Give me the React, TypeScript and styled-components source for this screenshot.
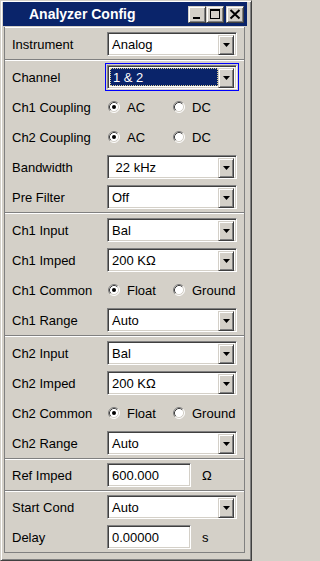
import React from 'react';
import styled, { createGlobalStyle } from 'styled-components';

const Global = createGlobalStyle`
  html, body { margin: 0; padding: 0; background: #d4d0c8; }
  body { font-family: "Liberation Sans", Arial, sans-serif; font-size: 13px; color: #000; }
  * { box-sizing: border-box; }
`;

const Window = styled.div`
  width: 252px;
  height: 561px;
  background: #d4d0c8;
  border: 1px solid;
  border-color: #d4d0c8 #404040 #404040 #d4d0c8;
  box-shadow: inset 1px 1px #ffffff, inset -1px -1px #808080;
  padding: 1px 4px 3px 2px;
  display: flex;
  flex-direction: column;
`;

const TitleBar = styled.div`
  height: 24px;
  flex: none;
  background: #0a246a;
  display: flex;
  align-items: center;
  padding: 0 3px 0 26px;
`;

const Title = styled.div`
  color: #fff;
  font-weight: bold;
  font-size: 14px;
  white-space: nowrap;
`;

const TitleButtons = styled.div`
  margin-left: auto;
  display: flex;
  align-items: center;
`;

const RaisedButton = styled.div<{ $w: number; $h: number; $gap?: number }>`
  width: ${(p) => p.$w}px;
  height: ${(p) => p.$h}px;
  margin-left: ${(p) => p.$gap ?? 0}px;
  flex: none;
  background: #d4d0c8;
  border: 1px solid;
  border-color: #d4d0c8 #404040 #404040 #d4d0c8;
  box-shadow: inset 1px 1px #ffffff, inset -1px -1px #808080;
  display: flex;
  align-items: center;
  justify-content: center;
`;

const Panel = styled.div`
  margin: 1px 2px 0 1px;
  border-left: 1px solid #808080;
  border-right: 1px solid #808080;
  display: flex;
  flex-direction: column;
`;

const Section = styled.div<{ $pad: number }>`
  border-top: 1px solid #ffffff;
  border-bottom: 1px solid #808080;
  padding-top: ${(p) => p.$pad}px;
`;

const Row = styled.div`
  height: 30px;
  display: flex;
  align-items: center;
  padding-left: 7px;
`;

const Label = styled.div`
  width: 95px;
  flex: none;
  white-space: nowrap;
`;

const Sunken = styled.div<{ $w: number; $focus?: boolean }>`
  width: ${(p) => p.$w}px;
  height: 24px;
  flex: none;
  background: #fff;
  border: 1px solid;
  border-color: #808080 #ffffff #ffffff #808080;
  box-shadow: inset 1px 1px #404040, inset -1px -1px #d4d0c8;
  padding: 2px;
  display: flex;
  align-items: stretch;
  outline: ${(p) => (p.$focus ? '1px solid #0000ff' : 'none')};
  outline-offset: 1px;
`;

const Value = styled.div<{ $selected?: boolean }>`
  flex: 1;
  display: flex;
  align-items: center;
  padding-left: ${(p) => (p.$selected ? 2 : 1)}px;
  white-space: nowrap;
  background: ${(p) => (p.$selected ? '#0a246a' : 'transparent')};
  color: ${(p) => (p.$selected ? '#fff' : '#000')};
  border: 1px ${(p) => (p.$selected ? 'dotted #d8cf98' : 'solid transparent')};
`;

const Unit = styled.div`
  margin-left: 11px;
`;

const RadioGroup = styled.div`
  display: flex;
  margin-left: 1px;
`;

const RadioOption = styled.div`
  width: 65px;
  display: flex;
  align-items: center;
  gap: 7px;
  white-space: nowrap;
`;

const Arrow = () => (
  <svg width="7" height="4" viewBox="0 0 7 4">
    <polygon points="0,0 7,0 3.5,4" fill="#000" />
  </svg>
);

const Radio = ({ on }: { on: boolean }) => (
  <svg width="12" height="12" viewBox="0 0 12 12">
    <circle cx="6" cy="6" r="5" fill="#fff" />
    <path d="M2.11 9.89 A5.5 5.5 0 0 1 9.89 2.11" fill="none" stroke="#808080" strokeWidth="1" />
    <path d="M2.82 9.18 A4.5 4.5 0 0 1 9.18 2.82" fill="none" stroke="#404040" strokeWidth="1" />
    <path d="M9.89 2.11 A5.5 5.5 0 0 1 2.11 9.89" fill="none" stroke="#ffffff" strokeWidth="1" />
    <path d="M9.18 2.82 A4.5 4.5 0 0 1 2.82 9.18" fill="none" stroke="#d4d0c8" strokeWidth="1" />
    {on && <circle cx="6" cy="6" r="2" fill="#000" />}
  </svg>
);

const Dropdown = ({ value, focus }: { value: string; focus?: boolean }) => (
  <Sunken $w={130} $focus={focus}>
    <Value $selected={focus}>{value}</Value>
    <RaisedButton $w={16} $h={20}>
      <Arrow />
    </RaisedButton>
  </Sunken>
);

const TextField = ({ value, unit }: { value: string; unit: string }) => (
  <>
    <Sunken $w={84}>
      <Value>{value}</Value>
    </Sunken>
    <Unit>{unit}</Unit>
  </>
);

const Radios = ({ a, b }: { a: string; b: string }) => (
  <RadioGroup>
    <RadioOption>
      <Radio on />
      {a}
    </RadioOption>
    <RadioOption>
      <Radio on={false} />
      {b}
    </RadioOption>
  </RadioGroup>
);

const SelectRow = ({ label, value, focus }: { label: string; value: string; focus?: boolean }) => (
  <Row>
    <Label>{label}</Label>
    <Dropdown value={value} focus={focus} />
  </Row>
);

const RadioRow = ({ label, a, b }: { label: string; a: string; b: string }) => (
  <Row>
    <Label>{label}</Label>
    <Radios a={a} b={b} />
  </Row>
);

const FieldRow = ({ label, value, unit }: { label: string; value: string; unit: string }) => (
  <Row>
    <Label>{label}</Label>
    <TextField value={value} unit={unit} />
  </Row>
);

export default function App() {
  return (
    <>
      <Global />
      <Window>
        <TitleBar>
          <Title>Analyzer Config</Title>
          <TitleButtons>
            <RaisedButton $w={18} $h={17}>
              <svg width="14" height="13" viewBox="0 0 14 13">
                <rect x="3" y="9" width="7" height="2" fill="#000" />
              </svg>
            </RaisedButton>
            <RaisedButton $w={18} $h={17}>
              <svg width="14" height="13" viewBox="0 0 14 13">
                <rect x="2.5" y="1.5" width="9" height="9" fill="none" stroke="#000" strokeWidth="1" />
                <rect x="2" y="1" width="10" height="2" fill="#000" />
              </svg>
            </RaisedButton>
            <RaisedButton $w={18} $h={17} $gap={2}>
              <svg width="14" height="13" viewBox="0 0 14 13">
                <path d="M2.5 2 L11.5 10.5 M11.5 2 L2.5 10.5" stroke="#000" strokeWidth="2" />
              </svg>
            </RaisedButton>
          </TitleButtons>
        </TitleBar>
        <Panel>
          <Section $pad={1}>
            <SelectRow label="Instrument" value="Analog" />
          </Section>
          <Section $pad={1}>
            <SelectRow label="Channel" value="1 & 2" focus />
            <RadioRow label="Ch1  Coupling" a="AC" b="DC" />
            <RadioRow label="Ch2 Coupling" a="AC" b="DC" />
            <SelectRow label="Bandwidth" value={'\u00a022 kHz'} />
            <SelectRow label="Pre Filter" value="Off" />
          </Section>
          <Section $pad={1}>
            <SelectRow label="Ch1 Input" value="Bal" />
            <SelectRow label="Ch1 Imped" value="200 KΩ" />
            <RadioRow label="Ch1 Common" a="Float" b="Ground" />
            <SelectRow label="Ch1 Range" value="Auto" />
          </Section>
          <Section $pad={1}>
            <SelectRow label="Ch2 Input" value="Bal" />
            <SelectRow label="Ch2 Imped" value="200 KΩ" />
            <RadioRow label="Ch2 Common" a="Float" b="Ground" />
            <SelectRow label="Ch2 Range" value="Auto" />
          </Section>
          <Section $pad={0}>
            <FieldRow label="Ref Imped" value="600.000" unit="Ω" />
          </Section>
          <Section $pad={0}>
            <SelectRow label="Start Cond" value="Auto" />
            <FieldRow label="Delay" value="0.00000" unit="s" />
          </Section>
        </Panel>
      </Window>
    </>
  );
}
